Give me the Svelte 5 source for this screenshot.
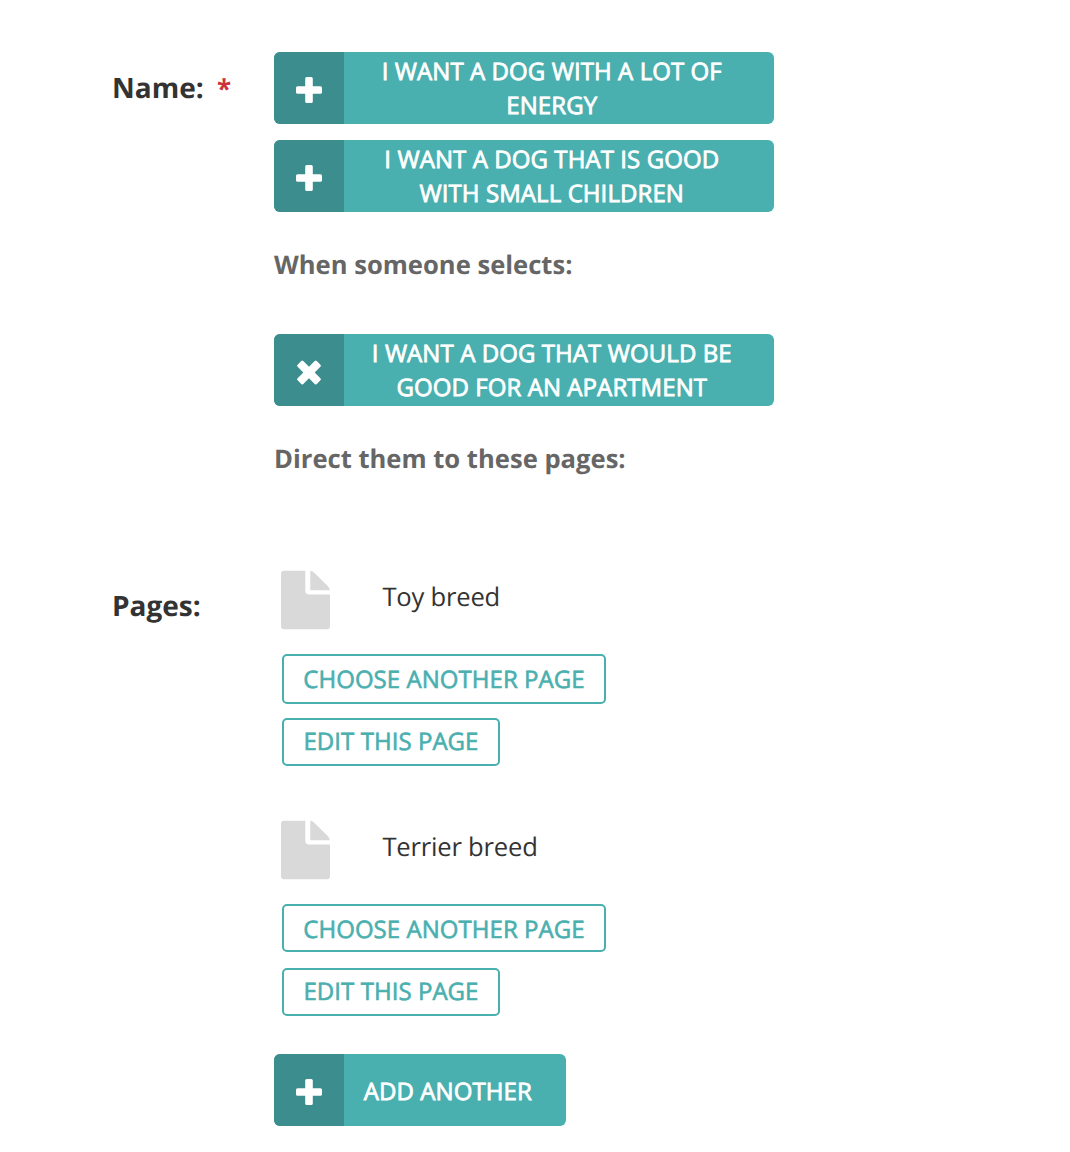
<script>
  const choices = [
    ['I WANT A DOG WITH A LOT OF', 'ENERGY'],
    ['I WANT A DOG THAT IS GOOD', 'WITH SMALL CHILDREN']
  ];
  const selected = ['I WANT A DOG THAT WOULD BE', 'GOOD FOR AN APARTMENT'];
  const pages = ['Toy breed', 'Terrier breed'];
</script>

{#snippet icon(kind)}
  <span class="icon">
    <svg class:cross={kind === 'cross'} width="26" height="26" viewBox="0 0 26 26" aria-hidden="true">
      <path d="M10.8 0h4.4q1.6 0 1.6 1.6v7.6h7.6q1.6 0 1.6 1.6v4.4q0 1.6-1.6 1.6h-7.6v7.6q0 1.6-1.6 1.6h-4.4q-1.6 0-1.6-1.6v-7.6H1.6Q0 16.8 0 15.2v-4.4q0-1.6 1.6-1.6h7.6V1.6Q9.2 0 10.8 0z" />
    </svg>
  </span>
{/snippet}

{#snippet choice(lines, kind)}
  <button class="solid">
    {@render icon(kind)}
    <span class="label">{lines[0]}<br />{lines[1]}</span>
  </button>
{/snippet}

<main>
  <section class="field names">
    <div class="title">Name: <span class="required">*</span></div>
    <div class="content">
      {#each choices as lines}
        {@render choice(lines, 'plus')}
      {/each}
      <p class="first">When someone selects:</p>
      {@render choice(selected, 'cross')}
      <p>Direct them to these pages:</p>
    </div>
  </section>

  <section class="field">
    <div class="title">Pages:</div>
    <div class="content">
      {#each pages as page, i}
        <article class:second={i === 1}>
          <div class="page">
            <svg width="49" height="60" viewBox="0 0 49 60" aria-hidden="true">
              <path d="M3 .7h21.3v19.8q0 4 4 4H49v31.8q0 3-3 3H3q-3 0-3-3V3.7q0-3 3-3zM29.3 .7q2 .2 4 2L46.7 16q1.8 1.8 2.2 4.2H29.3z" />
            </svg>
            <span>{page}</span>
          </div>
          <button class="outline choose">CHOOSE ANOTHER PAGE</button>
          <button class="outline edit">EDIT THIS PAGE</button>
        </article>
      {/each}
      <button class="solid add">
        {@render icon('plus')}
        <span class="label">ADD ANOTHER</span>
      </button>
    </div>
  </section>
</main>

<style>
  :global(body) { background: #fff; }
  main { box-sizing: border-box; width: 1070px; height: 1152px; padding: 52px 0 0 112px; overflow: hidden; color: #333; font-family: "Open Sans", sans-serif; text-rendering: geometricPrecision; }
  .field { display: grid; grid-template-columns: 162px 500px; }
  .names { height: 518px; }
  .title { padding-top: 16px; font-size: 28px; line-height: 40px; font-weight: 700; white-space: nowrap; }
  .required { margin-left: 6px; color: #cd3238; font-size: 26px; line-height: 1; }
  .content { display: flex; flex-direction: column; align-items: flex-start; }
  button { box-sizing: border-box; padding: 0; margin: 0; font-family: inherit; white-space: nowrap; text-rendering: inherit; }
  .solid { display: flex; width: 500px; height: 72px; margin-bottom: 16px; border: 0; border-radius: 6px; overflow: hidden; background: #4aafaf; color: #fff; font-size: 24px; line-height: 34px; letter-spacing: .08px; -webkit-text-stroke: .8px; }
  .icon { display: flex; flex: 0 0 70px; height: 72px; padding-top: 3px; box-sizing: border-box; align-items: center; justify-content: center; background: #3c8d8d; }
  .icon svg { fill: #fff; }
  .icon .cross { transform: translateY(.5px) rotate(45deg) scale(1.06); }
  .label { flex: 1; padding-top: 3px; padding-right: 14.5px; text-align: center; }
  p { margin: 18px 0 0; height: 60px; font-size: 25.6px; line-height: 38px; font-weight: 700; color: #666; }
  .first { height: 88px; }
  article { height: 250px; width: 500px; }
  .page { display: flex; height: 84px; padding-left: 7.4px; font-size: 25.6px; line-height: 53px; letter-spacing: -.2px; }
  .page svg { width: 49px; height: 60px; fill: #d9d9d9; margin-right: 52px; }
  .outline { display: block; margin-left: 8px; padding-top: 2px; border: 2px solid #4aafaf; border-radius: 5px; background: #fff; color: #4aafaf; font-size: 24px; line-height: 34px; letter-spacing: .05px; -webkit-text-stroke: .6px; }
  .choose { width: 324px; height: 50px; }
  .edit { width: 218px; height: 48px; margin-top: 14px; padding-bottom: 3px; }
  .second { height: 234px; }
  .second .choose { height: 48px; padding-top: 3px; }
  .second .edit { margin-top: 16px; }
  .add { width: 292px; }
  .add .label { padding-top: 21px; }
</style>
